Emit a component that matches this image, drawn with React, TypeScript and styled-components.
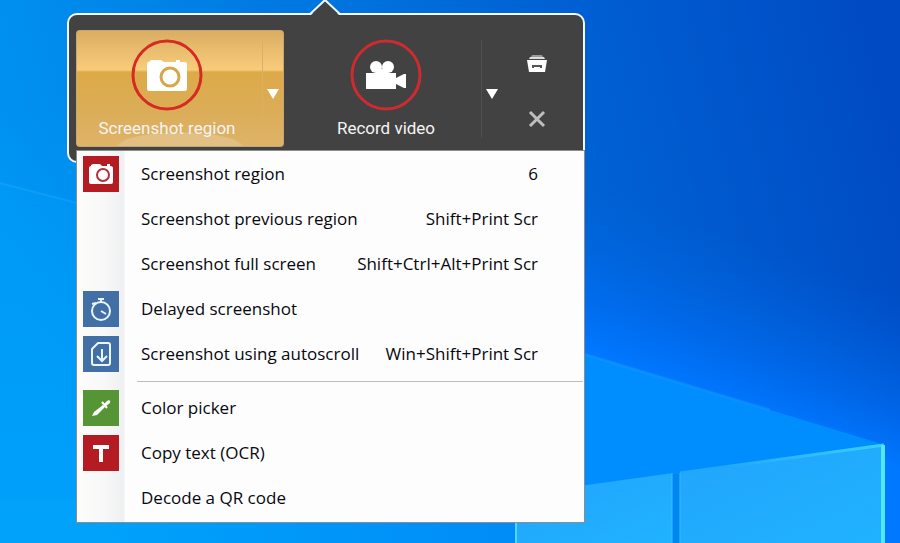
import React from "react";
import styled, { createGlobalStyle } from "styled-components";

const GlobalStyle = createGlobalStyle`
  *, *::before, *::after { box-sizing: border-box; }
  body { margin: 0; background: #0078e8; }
  button { font: inherit; color: inherit; border: 0; padding: 0; background: none; cursor: pointer; }
`;

const Desktop = styled.main`
  position: relative;
  min-height: 100vh;
  padding: 13px 16px 16px 67px;
  overflow: hidden;
  isolation: isolate;
`;

const Wallpaper = styled.svg`
  position: absolute;
  inset: 0;
  width: 100%;
  height: 100%;
  z-index: -1;
`;

const Launcher = styled.div`
  position: relative;
  width: 100%;
  max-width: 518px;
`;

const Notch = styled.svg`
  position: absolute;
  top: -13px;
  left: 50%;
  margin-left: -16px;
  width: 30px;
  height: 16px;
`;

const Toolbar = styled.div`
  display: flex;
  gap: 11px;
  padding: 15px 7px 14px;
  border: 2px solid #f4f9ff;
  border-radius: 10px;
  background: #424242;
  color: #f4f4f4;
  font: 17px/20px Roboto, "Liberation Sans", Arial, sans-serif;
`;

const SplitButton = styled.div<{ $active?: boolean }>`
  flex: 0 1 208px;
  display: flex;
  height: 117px;
  border-radius: 4px;
  overflow: hidden;
  background: ${(p) =>
    p.$active
      ? `radial-gradient(ellipse 64px 15px at 50% 100%, #e2c083 0 94%, transparent),
         linear-gradient(#d9ad62, #f9cc7b 34%, #ddaa48 36%, #dbad58 70%, #deb469)`
      : "none"};
  box-shadow: ${(p) => (p.$active ? "inset 0 0 0 1px #c9a671" : "none")};
`;

const MainAction = styled.button`
  flex: 1;
  display: flex;
  flex-direction: column;
  align-items: center;
  gap: 7px;
  padding: 9px 4px 0 0;
`;

const Label = styled.span`
  white-space: nowrap;
`;

const CaretButton = styled.button<{ $line: string }>`
  width: 22px;
  margin: 10px 0 9px;
  padding: 8px 2px 0 0;
  border-left: 1px solid ${(p) => p.$line};
`;

const SideActions = styled.div`
  flex: 1;
  display: flex;
  flex-direction: column;
  align-items: center;
  gap: 32px;
  padding: 21px 16px 0 0;
`;

const SideButton = styled.button`
  width: 24px;
  height: 24px;
`;

const Menu = styled.div`
  position: relative;
  margin: -13px 0 0 9px;
  padding: 1px 0;
  border: 1px solid #8b8d90;
  background: linear-gradient(90deg, #fcfcfb 0, #f8f8f8 26px, #eff0f1 47px, #fdfdfe 48px);
  color: #08080e;
  font: 17px/24px "Open Sans", "Noto Sans", sans-serif;
`;

const Item = styled.button`
  display: grid;
  grid-template-columns: 36px 1fr auto;
  align-items: center;
  width: 100%;
  height: 45px;
  padding: 0 46px 1px 6px;
  text-align: left;
  white-space: nowrap;
  &:hover { background: #e5f1fb80; }
`;

const ItemLabel = styled.span`
  padding: 0 16px 0 22px;
`;

const Tile = styled.span<{ $color?: string }>`
  display: block;
  width: 36px;
  height: 36px;
  background: ${(p) => p.$color ?? "transparent"};
  svg { display: block; }
`;

const Separator = styled.hr`
  height: 1px;
  margin: 4px 1px 4px 60px;
  border: 0;
  background: #bdbdbf;
`;

const RingedCamera = () => (
  <svg width="72" height="72" viewBox="0 0 72 72" aria-hidden="true">
    <circle cx="36" cy="36" r="34" fill="none" stroke="#d52b23" strokeWidth="3" />
    <path d="M16 25q0-2 2-2l2-2h10l3 2h12v-2h4v2h4q3 0 3 2v24q0 3-2 3H18q-2 0-2-3V25Z" fill="#fff" />
    <circle cx="39" cy="38" r="9" fill="#fff" stroke="#d8a64a" strokeWidth="3" />
  </svg>
);

const RingedVideo = () => (
  <svg width="72" height="72" viewBox="0 0 72 72" aria-hidden="true">
    <circle cx="36" cy="36" r="34" fill="none" stroke="#cf2a30" strokeWidth="3" />
    <g fill="#fff">
      <circle cx="26" cy="28" r="6" />
      <circle cx="38" cy="28" r="6" />
      <path d="M16 34h30v5l8-4h2v14h-2l-8-4v5H16ZM26 30h12v5H26Z" />
    </g>
  </svg>
);

const Caret = () => (
  <svg width="12" height="10" viewBox="0 0 12 10" aria-hidden="true">
    <path d="M0 0h12L6 10Z" fill="#fff" />
  </svg>
);

const DrawerIcon = () => (
  <svg width="24" height="24" viewBox="0 0 24 24" aria-hidden="true">
    <path d="M7 4h10l1 2H6Z" fill="#999" />
    <path d="M5 6h14l1 2H4Z" fill="#ddd" />
    <path d="M2 9h20l-2 12H4Z" fill="#fff" />
    <path d="M8 17v-2h8v2" fill="none" stroke="#555" strokeWidth="2" />
  </svg>
);

const CloseIcon = () => (
  <svg width="24" height="24" viewBox="0 0 24 24" aria-hidden="true">
    <path d="m5 5 14 14M19 5 5 19" stroke="#bebebe" strokeWidth="3" />
  </svg>
);

const CameraIcon = () => (
  <svg width="36" height="36" viewBox="0 0 36 36" aria-hidden="true">
    <path d="M6 12q0-2 2-2V9l2-1h7l2 2h5V8h3v2q3 0 3 2v14q0 2-2 2H8q-2 0-2-2Z" fill="#fff" />
    <circle cx="20" cy="19" r="6" fill="#fff" stroke="#b3303a" strokeWidth="2" />
  </svg>
);

const TimerIcon = () => (
  <svg width="36" height="36" viewBox="0 0 36 36" fill="none" stroke="#eaf5ff" strokeWidth="2" aria-hidden="true">
    <circle cx="18" cy="20" r="9" />
    <path d="M18 11V7M15 8h6M9 13l4-1M18 20l5 3" />
  </svg>
);

const ScrollIcon = () => (
  <svg width="36" height="36" viewBox="0 0 36 36" fill="none" stroke="#eaf5ff" strokeWidth="2" aria-hidden="true">
    <path d="M15 7h10q2 0 2 2v18q0 2-2 2H11q-2 0-2-2V13Z" strokeLinejoin="round" />
    <path d="M19 13v12M14 20l5 5 5-5" />
  </svg>
);

const PickerIcon = () => (
  <svg width="36" height="36" viewBox="0 0 36 36" aria-hidden="true">
    <path d="m9 26 2-4 9-7 2 2-8 8Z" fill="#fff" />
    <path d="m19 12 5 6" stroke="#fff" strokeWidth="2" />
    <path d="m21 14 3-3 2-1q2 1 1 3l-4 3Z" fill="#fff" />
  </svg>
);

const TextIcon = () => (
  <svg width="36" height="36" viewBox="0 0 36 36" aria-hidden="true">
    <path d="M10 12h16M18 11v16" stroke="#fff" strokeWidth="4" />
  </svg>
);

type Entry = { label: string; keys?: string; color?: string; icon?: React.ReactNode };

const captureEntries: Entry[] = [
  { label: "Screenshot region", keys: "6", color: "#b41b22", icon: <CameraIcon /> },
  { label: "Screenshot previous region", keys: "Shift+Print Scr" },
  { label: "Screenshot full screen", keys: "Shift+Ctrl+Alt+Print Scr" },
  { label: "Delayed screenshot", color: "#426fa5", icon: <TimerIcon /> },
  { label: "Screenshot using autoscroll", keys: "Win+Shift+Print Scr", color: "#426fa5", icon: <ScrollIcon /> },
];

const toolEntries: Entry[] = [
  { label: "Color picker", color: "#559535", icon: <PickerIcon /> },
  { label: "Copy text (OCR)", color: "#b41b22", icon: <TextIcon /> },
  { label: "Decode a QR code" },
];

const MenuItem = ({ label, keys, color, icon }: Entry) => (
  <Item type="button" role="menuitem">
    <Tile $color={color}>{icon}</Tile>
    <ItemLabel>{label}</ItemLabel>
    <span>{keys}</span>
  </Item>
);

const DesktopWallpaper = () => (
  <Wallpaper viewBox="0 0 900 543" preserveAspectRatio="none" aria-hidden="true">
    <defs>
      <linearGradient id="sky" gradientUnits="userSpaceOnUse" x1="0" y1="220" x2="860" y2="0">
        <stop offset="0" stopColor="#0094f2" />
        <stop offset=".35" stopColor="#007ae2" />
        <stop offset=".65" stopColor="#0062d4" />
        <stop offset="1" stopColor="#004bc4" />
      </linearGradient>
      <linearGradient id="floor" x1="0" y1="0" x2="0" y2="1">
        <stop offset=".2" stopColor="#00a2fb" stopOpacity="0" />
        <stop offset="1" stopColor="#00a2fb" stopOpacity=".9" />
      </linearGradient>
      <linearGradient id="glow" gradientUnits="userSpaceOnUse" x1="660" y1="378" x2="716" y2="228">
        <stop offset="0" stopColor="#0078ff" />
        <stop offset=".3" stopColor="#0070f8" stopOpacity=".7" />
        <stop offset="1" stopColor="#0064e0" stopOpacity="0" />
      </linearGradient>
      <linearGradient id="pane" x1="0" y1="0" x2="1" y2="1">
        <stop offset="0" stopColor="#22a5fc" />
        <stop offset="1" stopColor="#20b2ff" />
      </linearGradient>
      <linearGradient id="edge" x1="0" y1="0" x2="1" y2="0">
        <stop offset=".2" stopColor="#20a8f8" />
        <stop offset="1" stopColor="#38cfff" />
      </linearGradient>
      <linearGradient id="ground" x1="0" y1="0" x2="1" y2="0">
        <stop offset=".2" stopColor="#00a2fa" />
        <stop offset="1" stopColor="#008cf8" />
      </linearGradient>
    </defs>
    <path d="M0 0h900v543H0Z" fill="url(#sky)" />
    <path d="M0 0h500v543H0Z" fill="url(#floor)" />
    <path d="M500 0h400v543H500Z" fill="url(#glow)" />
    <path d="M0 183 100 209v334H0Z" fill="#00a4ff" opacity=".2" />
    <path d="m0 183 100 26" stroke="#28acff" strokeWidth="2" opacity=".35" />
    <path d="m500 328 385 117v98H500Z" fill="#008eff" />
    <path d="m580 353 190 57" stroke="#1495ff" strokeWidth="3" opacity=".5" />
    <path d="M0 500h515v43H0Z" fill="url(#ground)" />
    <path d="m515 495 158-22v70H515Z" fill="url(#pane)" />
    <path d="m680 473 204-28v98H680Z" fill="url(#pane)" />
    <path d="m680 473 204-28" stroke="url(#edge)" strokeWidth="3" />
    <path d="M883 445v98" stroke="#50e8ff" strokeWidth="4" />
    <path d="M516 520v23" stroke="#50d8ff" strokeWidth="2" />
    <path d="M672 474h8v69h-8Z" fill="#0088f0" />
    <path d="M672 474v69M680 473v70" stroke="#38b8ff" strokeWidth="1" />
  </Wallpaper>
);

export default function App() {
  return (
    <>
      <GlobalStyle />
      <Desktop>
        <DesktopWallpaper />
        <Launcher>
          <Toolbar role="toolbar" aria-label="Capture">
            <SplitButton $active>
              <MainAction type="button">
                <RingedCamera />
                <Label>Screenshot region</Label>
              </MainAction>
              <CaretButton type="button" $line="#dcb060" aria-label="Screenshot options">
                <Caret />
              </CaretButton>
            </SplitButton>
            <SplitButton>
              <MainAction type="button">
                <RingedVideo />
                <Label>Record video</Label>
              </MainAction>
              <CaretButton type="button" $line="#505050" aria-label="Video options">
                <Caret />
              </CaretButton>
            </SplitButton>
            <SideActions>
              <SideButton type="button" aria-label="Open library">
                <DrawerIcon />
              </SideButton>
              <SideButton type="button" aria-label="Close">
                <CloseIcon />
              </SideButton>
            </SideActions>
          </Toolbar>
          <Notch viewBox="0 0 30 16" aria-hidden="true">
            <path d="M1 15 15 1l14 14v1H1Z" fill="#424242" />
            <path d="M0 14 15 0l15 14" fill="none" stroke="#f4f9ff" strokeWidth="2" />
          </Notch>
          <Menu role="menu" aria-label="Screenshot options">
            {captureEntries.map((e) => (
              <MenuItem key={e.label} {...e} />
            ))}
            <Separator />
            {toolEntries.map((e) => (
              <MenuItem key={e.label} {...e} />
            ))}
          </Menu>
        </Launcher>
      </Desktop>
    </>
  );
}
